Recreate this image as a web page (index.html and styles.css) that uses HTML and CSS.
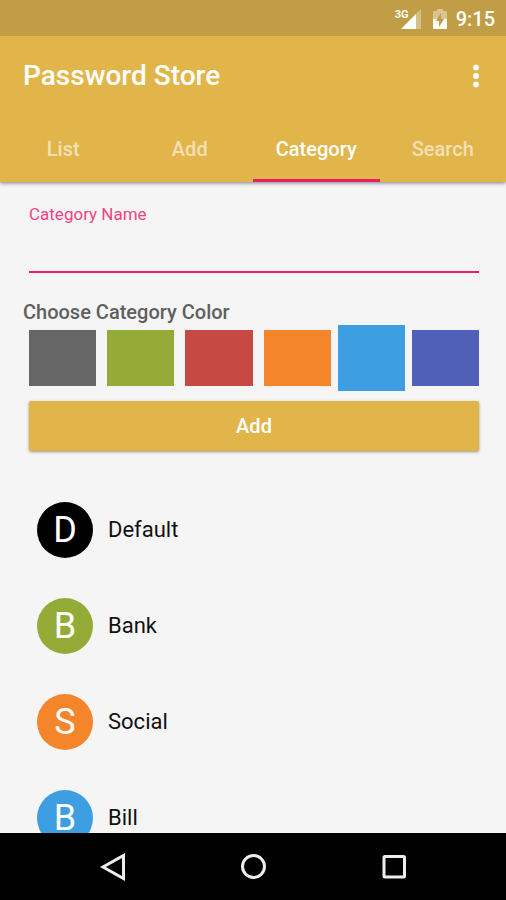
FILE: index.html
```html
<!DOCTYPE html>
<html lang="en">
<head>
<meta charset="utf-8">
<meta name="viewport" content="width=device-width, initial-scale=1">
<title>Password Store</title>
<link rel="stylesheet" href="styles.css">
</head>
<body>
<div class="status-bar">
  <div class="signal">
    <span class="network">3G</span>
    <svg class="signal-icon" width="20" height="20" viewBox="0 0 20 20" aria-hidden="true">
      <path d="M0 20 20 0V20Z" fill="#fff" fill-opacity=".35"/>
      <path d="M0 20 15 5V20Z" fill="#fff"/>
    </svg>
  </div>
  <svg class="battery-icon" width="14" height="20" viewBox="0 0 14 20" aria-hidden="true">
    <path d="M4 0H10V2H13Q14 2 14 3V10H0V3Q0 2 1 2H4Z" fill="#fff" fill-opacity=".4"/>
    <path d="M0 10H14V19Q14 20 13 20H1Q0 20 0 19Z" fill="#fff"/>
    <path d="M8 4 3 12H6V18L11 10H8Z" fill="#c19d45"/>
  </svg>
  <time class="clock">9:15</time>
</div>
<header class="app-bar">
  <div class="toolbar">
    <h1 class="title">Password Store</h1>
    <button class="menu" type="button" aria-label="More options">
      <svg width="6" height="24" viewBox="0 0 6 24" fill="#fff" aria-hidden="true"><circle cx="3" cy="3.500" r="2.900"/><circle cx="3" cy="12" r="2.900"/><circle cx="3" cy="20.500" r="2.900"/></svg>
    </button>
  </div>
  <nav class="tabs">
    <a class="tab" href="#list">List</a>
    <a class="tab" href="#add">Add</a>
    <a class="tab tab-active" href="#category" aria-current="page">Category</a>
    <a class="tab" href="#search">Search</a>
  </nav>
</header>
<main class="content">
  <form class="form">
    <label class="field-label" for="name">Category Name</label>
    <input class="field" id="name" type="text">
    <fieldset class="colors">
      <legend class="legend">Choose Category Color</legend>
      <div class="swatches">
        <input class="swatch gray" type="radio" name="color" aria-label="Gray">
        <input class="swatch green" type="radio" name="color" aria-label="Green">
        <input class="swatch red" type="radio" name="color" aria-label="Red">
        <input class="swatch orange" type="radio" name="color" aria-label="Orange">
        <input class="swatch blue" type="radio" name="color" aria-label="Blue" checked>
        <input class="swatch indigo" type="radio" name="color" aria-label="Indigo">
      </div>
    </fieldset>
    <button class="submit" type="button">Add</button>
  </form>
  <ul class="categories">
    <li class="category"><span class="avatar black">D</span>Default</li>
    <li class="category"><span class="avatar green">B</span>Bank</li>
    <li class="category"><span class="avatar orange">S</span>Social</li>
    <li class="category"><span class="avatar blue">B</span>Bill</li>
  </ul>
</main>
<footer class="nav-bar">
  <button class="nav-button" type="button" aria-label="Back">
    <svg width="28" height="28" viewBox="0 0 28 28" aria-hidden="true"><path d="M24.500 2.500V25.500L4 14Z"/></svg>
  </button>
  <button class="nav-button" type="button" aria-label="Home">
    <svg width="28" height="28" viewBox="0 0 28 28" aria-hidden="true"><circle cx="14.500" cy="13.500" r="11"/></svg>
  </button>
  <button class="nav-button" type="button" aria-label="Recent apps">
    <svg width="28" height="28" viewBox="0 0 28 28" aria-hidden="true"><rect x="5" y="3.500" width="20.500" height="20.500" rx="1"/></svg>
  </button>
</footer>
</body>
</html>
```

FILE: styles.css
```css
* {
  box-sizing: border-box;
}

body {
  display: flex;
  flex-direction: column;
  height: 100vh;
  margin: 0;
  background: #f5f5f5;
  color: #111;
  font-family: Roboto, "Liberation Sans", sans-serif;
}

button {
  padding: 0;
  border: 0;
  background: none;
  font: inherit;
}

.status-bar {
  z-index: 2;
  display: flex;
  flex: none;
  align-items: center;
  justify-content: flex-end;
  gap: 12px;
  height: 36px;
  padding: 2px 11px 0;
  background: #c19d45;
  color: #fff;
}

.signal {
  display: flex;
  align-items: flex-start;
}

.network {
  margin-right: -8px;
  font-size: 11px;
  font-weight: 700;
  line-height: 11px;
}

.clock {
  margin-left: -3px;
  font-size: 20px;
  font-weight: 500;
  line-height: 24px;
}

.app-bar {
  z-index: 1;
  flex: none;
  background: #e2b54b;
  box-shadow: 0 1px 4px rgba(0, 0, 0, 0.5);
}

.toolbar {
  display: flex;
  align-items: center;
  justify-content: space-between;
  height: 80px;
  padding: 0 20px 0 23px;
}

.title {
  margin: 0;
  color: #fff;
  font-size: 28px;
  font-weight: 500;
  line-height: 32px;
}

.menu {
  display: flex;
  justify-content: center;
  width: 20px;
}

.tabs {
  display: grid;
  grid-template-columns: repeat(4, 1fr);
}

.tab {
  height: 66px;
  border-bottom: 3px solid transparent;
  color: rgba(255, 255, 255, 0.6);
  font-size: 20px;
  font-weight: 500;
  line-height: 66px;
  text-align: center;
  text-decoration: none;
}

.tab-active {
  border-color: #e91e63;
  color: #fff;
}

.content {
  flex: 1;
  min-height: 0;
  overflow: hidden;
}

.form {
  display: flex;
  flex-direction: column;
  padding: 22px 27px 0 29px;
}

.field-label {
  color: #f04482;
  font-size: 17px;
  line-height: 20px;
}

.field {
  width: 100%;
  height: 49px;
  padding: 8px 0;
  border: 0;
  border-bottom: 2px solid #e91e63;
  outline: 0;
  background: none;
  font: inherit;
  font-size: 20px;
}

.colors {
  min-width: 0;
  margin: 27px 0 0;
  padding: 0;
  border: 0;
}

.legend {
  margin-left: -6px;
  padding: 0;
  color: #5f5f5f;
  font-size: 20px;
  font-weight: 500;
  line-height: 24px;
}

.swatches {
  display: flex;
  align-items: center;
  height: 68px;
}

.swatch {
  flex: 1;
  height: 56px;
  margin: 0 11px 0 0;
  appearance: none;
}

.swatch:has(+ :checked),
.swatch:checked {
  margin-right: 7px;
}

.swatch:checked {
  height: 66px;
}

.swatch:last-child {
  margin-right: 0;
}

.submit {
  height: 50px;
  margin-top: 9px;
  border-radius: 2px;
  background: #e2b54b;
  box-shadow: 0 1px 3px rgba(0, 0, 0, 0.4);
  color: #fff;
  font-size: 20px;
  font-weight: 500;
}

.categories {
  margin: 30px 0 0;
  padding: 0;
  list-style: none;
}

.category {
  display: flex;
  align-items: center;
  gap: 15px;
  height: 96px;
  padding: 1px 37px 0;
  font-size: 22px;
}

.avatar {
  width: 56px;
  height: 56px;
  border-radius: 50%;
  color: #fff;
  font-size: 36px;
  line-height: 56px;
  text-align: center;
}

.black {
  background: #000;
}

.gray {
  background: #666;
}

.green {
  background: #95ab37;
}

.red {
  background: #c64a43;
}

.orange {
  background: #f5852b;
}

.blue {
  background: #3d9ee1;
}

.indigo {
  background: #5060b9;
}

.nav-bar {
  display: flex;
  flex: none;
  align-items: center;
  justify-content: center;
  height: 67px;
  background: #000;
}

.nav-button {
  display: flex;
  justify-content: center;
  width: 140px;
}

.nav-button svg {
  fill: none;
  stroke: #eee;
  stroke-width: 3;
}
```
